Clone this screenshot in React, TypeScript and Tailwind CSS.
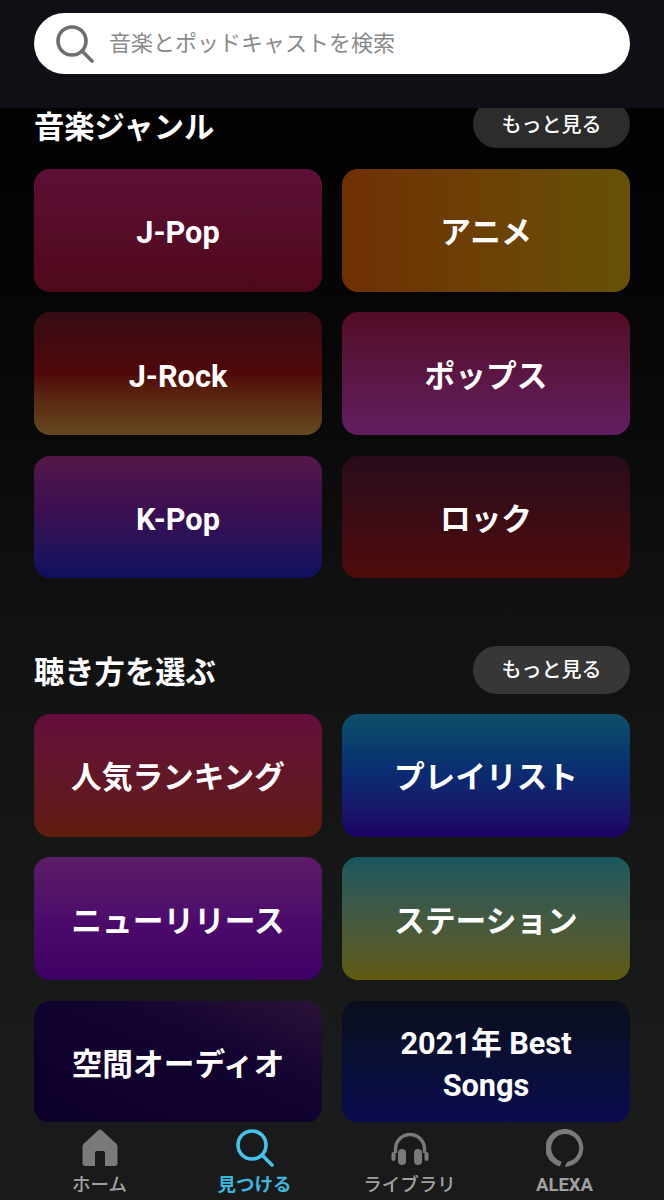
import type { ReactNode } from "react";

const font = "font-['Roboto','Noto_Sans_CJK_JP','Noto_Sans',sans-serif]";

type Card = { label: ReactNode; gradient: string };

const genres: Card[] = [
  { label: "J-Pop", gradient: "bg-gradient-to-b from-[#5c1036] to-[#50081a]" },
  { label: "アニメ", gradient: "bg-gradient-to-r from-[#702f04] to-[#665106]" },
  { label: "J-Rock", gradient: "bg-gradient-to-b from-[#360b14] via-[#500808] via-50% to-[#644a20]" },
  { label: "ポップス", gradient: "bg-gradient-to-b from-[#540b26] to-[#611e60]" },
  { label: "K-Pop", gradient: "bg-gradient-to-b from-[#541648] via-[#3c0e52] via-45% to-[#0c1060]" },
  { label: "ロック", gradient: "bg-gradient-to-b from-[#280b1a] to-[#500a0a]" },
];

const modes: Card[] = [
  { label: "人気ランキング", gradient: "bg-gradient-to-b from-[#650d3c] to-[#601c0e]" },
  { label: "プレイリスト", gradient: "bg-gradient-to-b from-[#0f4f68] via-[#0b2a72] via-50% to-[#1c0064]" },
  { label: "ニューリリース", gradient: "bg-gradient-to-b from-[#5c1c66] via-[#4d0c6c] via-50% to-[#3d0064]" },
  { label: "ステーション", gradient: "bg-gradient-to-b from-[#17565f] to-[#625a0a]" },
  { label: "空間オーディオ", gradient: "bg-gradient-to-bl from-[#2c1238] via-[#120330] via-40% to-[#0d0028]" },
  {
    label: (
      <>
        2021年 Best
        <br />
        Songs
      </>
    ),
    gradient: "bg-gradient-to-b from-[#0a0e1c] to-[#0c0a50]",
  },
];

function SearchIcon({ className }: { className: string }) {
  return (
    <svg viewBox="0 0 38 38" fill="none" stroke="currentColor" strokeWidth="3.6" strokeLinecap="round" className={className}>
      <circle cx="16" cy="16" r="14" />
      <path d="M26.5 26.5L36 36" />
    </svg>
  );
}

function CardGrid({ items }: { items: Card[] }) {
  return (
    <div className="grid grid-cols-2 gap-x-[20px] gap-y-[20.67px]">
      {items.map((item, i) => (
        <div
          key={i}
          className={`flex h-[122.67px] items-center justify-center rounded-[16px] pt-[6px] text-center text-[30.7px] leading-[42px] font-bold text-white ${item.gradient}`}
        >
          <span>{item.label}</span>
        </div>
      ))}
    </div>
  );
}

function SectionHead({ title, button }: { title: string; button: string }) {
  return (
    <div className="flex items-center justify-between">
      <h2 className="mt-[7px] text-[30.3px] leading-[32px] font-bold text-white">{title}</h2>
      <div className={`flex h-[48px] w-[157px] items-center justify-center rounded-full pt-[1px] text-[20px] font-medium text-white ${button}`}>
        もっと見る
      </div>
    </div>
  );
}

function NavItem({ icon, label, className }: { icon: ReactNode; label: string; className: string }) {
  return (
    <div className={`flex flex-col items-center ${className}`}>
      <div className="flex h-[38px] items-center justify-center">{icon}</div>
      <span className="mt-[5px] text-[18.5px] leading-[26px]">{label}</span>
    </div>
  );
}

export default function App() {
  return (
    <div className={`flex h-[1200px] w-[664px] flex-col overflow-hidden bg-black ${font}`}>
      <header className="h-[108px] shrink-0 bg-[#100f16] px-[34px] pt-[13px]">
        <div className="flex h-[61px] items-center rounded-full bg-white pl-[22px]">
          <SearchIcon className="h-[38px] w-[38px] text-[#6e6e6e]" />
          <span className="ml-[15px] text-[22px] text-[#8a8a8a]">音楽とポッドキャストを検索</span>
        </div>
      </header>

      <main className="min-h-0 flex-1 overflow-hidden bg-gradient-to-b from-[#020202] via-[#111111] via-50% to-[#1b1c1c] px-[34px]">
        <div className="-mt-[8px]">
          <SectionHead title="音楽ジャンル" button="bg-[#2c2c2c]" />
          <div className="mt-[21px]">
            <CardGrid items={genres} />
          </div>
          <div className="mt-[67.65px]">
            <SectionHead title="聴き方を選ぶ" button="bg-[#373737]" />
          </div>
          <div className="mt-[20px]">
            <CardGrid items={modes} />
          </div>
        </div>
      </main>

      <nav className="grid h-[78px] shrink-0 grid-cols-4 bg-[#1a1a1a] px-[22px] pt-[7px] font-medium text-[#a0a0a0]">
        <NavItem
          label="ホーム"
          className=""
          icon={
            <svg viewBox="0 0 36 38" className="h-[38px] w-[36px] fill-[#7a7a7a]">
              <path
                fillRule="evenodd"
                d="M16 1.5a3 3 0 0 1 4 0L34.500 15a3 3 0 0 1 1 2.300V34a3 3 0 0 1-3 3H23V24a2 2 0 0 0-2-2h-6a2 2 0 0 0-2 2V37H3.500a3 3 0 0 1-3-3V17.300a3 3 0 0 1 1-2.300Z"
              />
            </svg>
          }
        />
        <NavItem
          label="見つける"
          className="font-bold text-[#3cb8df]"
          icon={<SearchIcon className="h-[38px] w-[38px] text-[#44c4ea]" />}
        />
        <NavItem
          label="ライブラリ"
          className=""
          icon={
            <svg viewBox="0 0 38 38" fill="none" className="mt-[4px] h-[38px] w-[38px]">
              <path d="M4.500 22V18a14.500 14.500 0 0 1 29 0v4" stroke="#7a7a7a" strokeWidth="3.4" />
              <rect x="7" y="18" width="8" height="16" rx="4" fill="#7a7a7a" />
              <rect x="23" y="18" width="8" height="16" rx="4" fill="#7a7a7a" />
              <rect x="0.500" y="21" width="4" height="9" rx="2" fill="#7a7a7a" />
              <rect x="33.500" y="21" width="4" height="9" rx="2" fill="#7a7a7a" />
            </svg>
          }
        />
        <NavItem
          label="ALEXA"
          className="font-bold"
          icon={
            <svg viewBox="0 0 38 38" className="h-[38px] w-[38px] fill-[#7a7a7a]">
              <path d="M14 37.500A19 19 0 1 1 18.500 38L21.500 32.800A14 14 0 1 0 15.500 32.500Z" />
            </svg>
          }
        />
      </nav>
    </div>
  );
}
